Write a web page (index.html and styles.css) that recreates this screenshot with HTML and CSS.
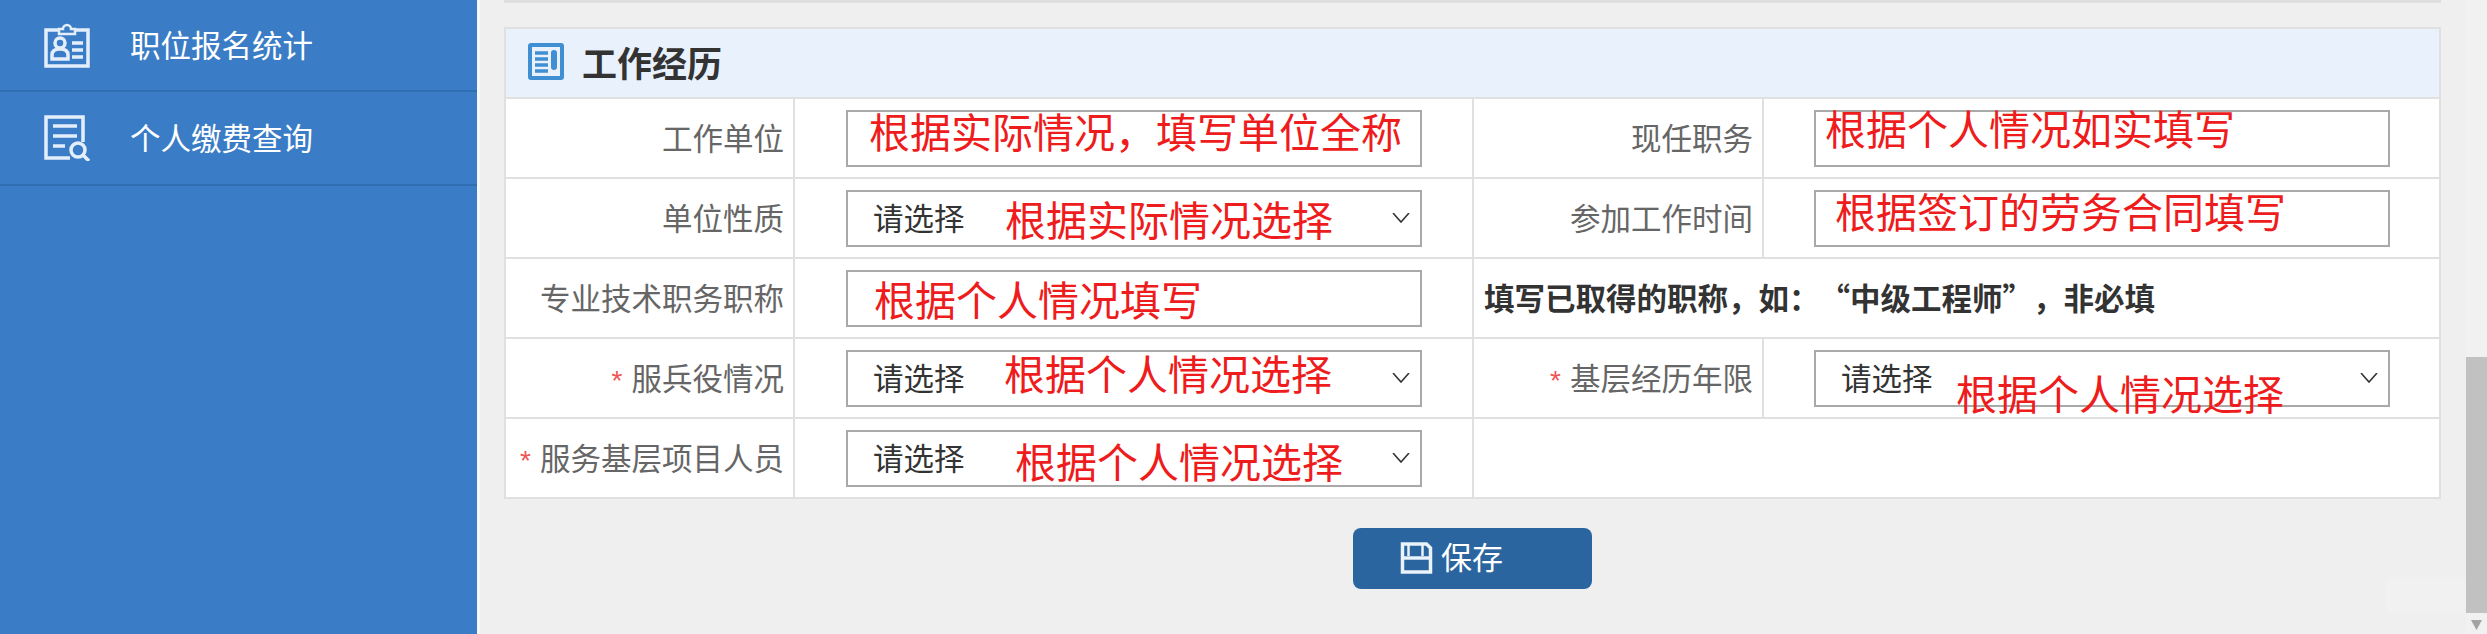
FILE: index.html
```html
<!DOCTYPE html>
<html lang="zh-CN">
<head>
<meta charset="UTF-8">
<title>工作经历</title>
<link rel="stylesheet" href="styles.css">
</head>
<body>
  <aside class="sidebar">
    <a class="side-item side-first" href="#">
      <svg class="side-icon" viewBox="0 0 46 46" fill="none" stroke="#e3eefa" stroke-width="3.5">
        <path d="M14 8H2v36h42V8H32"/>
        <path d="M15 12V7h4a4 4 0 0 1 8 0h4v5z" stroke-width="2.5"/>
        <circle cx="16" cy="21" r="5"/>
        <path d="M8 37v-4c0-4 3-6 8-6s8 2 8 6v4z"/>
        <path d="M28 21h11M28 28h11M28 35h11"/>
      </svg>
      <span>职位报名统计</span>
    </a>
    <a class="side-item" href="#">
      <svg class="side-icon" viewBox="0 0 46 46" fill="none" stroke="#e3eefa" stroke-width="3.5">
        <path d="M26 43H2V2h37v25"/>
        <path d="M9 11h24M9 21h24M9 31h12"/>
        <circle cx="34" cy="35" r="7"/>
        <path d="M39 40l6 6"/>
      </svg>
      <span>个人缴费查询</span>
    </a>
  </aside>

  <main class="content">
    <div class="prev-block"></div>

    <section class="panel">
      <h2 class="panel-title">
        <svg class="title-icon" viewBox="0 0 36 37">
          <rect width="36" height="37" rx="3" fill="#3f8fd2"/>
          <rect x="4" y="4" width="28" height="29" fill="#e9f1fd"/>
          <path d="M7 10h13M7 16h13M7 22h13M7 28h13" stroke="#3f8fd2" stroke-width="3.5"/>
          <rect x="23" y="7" width="6" height="20" rx="3" fill="#3f8fd2"/>
        </svg>
        工作经历
      </h2>
      <table class="form-table">
        <colgroup>
          <col class="col-first"><col class="col-field"><col class="col-label"><col>
        </colgroup>
        <tr>
          <td class="label">工作单位</td>
          <td>
            <div class="field">
              <input type="text">
              <span class="mark mark-1">根据实际情况，填写单位全称</span>
            </div>
          </td>
          <td class="label">现任职务</td>
          <td>
            <div class="field">
              <input type="text">
              <span class="mark mark-6">根据个人情况如实填写</span>
            </div>
          </td>
        </tr>
        <tr>
          <td class="label">单位性质</td>
          <td>
            <div class="field">
              <select><option>请选择</option></select>
              <svg class="chevron" viewBox="0 0 18 10"><path d="M1 0l8 9 8-9"/></svg>
              <span class="mark mark-2">根据实际情况选择</span>
            </div>
          </td>
          <td class="label">参加工作时间</td>
          <td>
            <div class="field">
              <input type="text">
              <span class="mark mark-7">根据签订的劳务合同填写</span>
            </div>
          </td>
        </tr>
        <tr>
          <td class="label">专业技术职务职称</td>
          <td>
            <div class="field">
              <input type="text">
              <span class="mark mark-3">根据个人情况填写</span>
            </div>
          </td>
          <td class="hint" colspan="2">填写已取得的职称，如：“中级工程师”，非必填</td>
        </tr>
        <tr>
          <td class="label"><span class="req">*</span>服兵役情况</td>
          <td>
            <div class="field">
              <select><option>请选择</option></select>
              <svg class="chevron" viewBox="0 0 18 10"><path d="M1 0l8 9 8-9"/></svg>
              <span class="mark mark-4">根据个人情况选择</span>
            </div>
          </td>
          <td class="label"><span class="req">*</span>基层经历年限</td>
          <td>
            <div class="field">
              <select><option>请选择</option></select>
              <svg class="chevron" viewBox="0 0 18 10"><path d="M1 0l8 9 8-9"/></svg>
              <span class="mark mark-8">根据个人情况选择</span>
            </div>
          </td>
        </tr>
        <tr>
          <td class="label"><span class="req">*</span>服务基层项目人员</td>
          <td>
            <div class="field">
              <select><option>请选择</option></select>
              <svg class="chevron" viewBox="0 0 18 10"><path d="M1 0l8 9 8-9"/></svg>
              <span class="mark mark-5">根据个人情况选择</span>
            </div>
          </td>
          <td colspan="2"></td>
        </tr>
      </table>
    </section>

    <div class="actions">
      <button class="save-btn" type="button">
        <svg class="save-icon" viewBox="0 0 32 32" fill="none" stroke="#eaf2fa" stroke-width="3.5">
          <path d="M2 2h24l4 4v24H2z"/>
          <path d="M2 16h28"/>
          <path d="M22 2v12" stroke-width="2.5"/>
          <path d="M8 2v12" stroke-width="2.5"/>
        </svg>
        <span class="save-text">保存</span>
      </button>
    </div>
  </main>

  <div class="scrollbar">
    <div class="scroll-thumb"></div>
    <svg class="scroll-arrow" viewBox="0 0 11 10"><path d="M0 0h11L5.5 10z"/></svg>
  </div>
  <div class="ghost-box"></div>
</body>
</html>
```

FILE: styles.css
```css
* {
  box-sizing: border-box;
}

body {
  margin: 0;
  height: 634px;
  overflow: hidden;
  display: flex;
  background-color: #efefef;
  color: #333;
  font-family: "Noto Sans CJK SC", "Noto Sans", sans-serif;
  font-size: 30.5px;
}

/* left menu */
.sidebar {
  width: 477px;
  flex-shrink: 0;
  background-color: #3a7dc6;
}

.side-item {
  display: flex;
  align-items: center;
  height: 94px;
  padding-left: 44px;
  color: #fff;
  text-decoration: none;
  border-bottom: 2px solid #2f6fb1;
}

.side-first {
  height: 92px;
}

.side-item span {
  margin-bottom: 2px;
}

.side-icon {
  width: 46px;
  height: 46px;
  margin-right: 40px;
}

.content {
  flex: 1;
  min-width: 0;
  padding: 0 25px 0 24px;
  border-left: 3px solid #f7f7f7;
}

.prev-block {
  height: 3px;
  background-color: #dedede;
  margin-bottom: 24px;
}

/* form panel */
.panel {
  border: 2px solid #e0e0e0;
  border-bottom: 0;
  background-color: #fff;
}

.panel-title {
  display: flex;
  align-items: center;
  height: 68px;
  margin: 0;
  padding: 0 0 3px 22px;
  font-size: 35px;
  font-weight: bold;
  color: #333;
  background-color: #e9f1fd;
}

.title-icon {
  width: 36px;
  height: 37px;
  margin-right: 18px;
}

.form-table {
  width: 100%;
  table-layout: fixed;
  border-collapse: collapse;
}

.form-table td {
  height: 80px;
  padding: 0 0 0 51px;
  border: 2px solid #e0e0e0;
  vertical-align: middle;
}

.form-table td:last-child {
  padding-left: 50px;
}

.form-table tr td:first-child {
  border-left: 0;
}

.form-table tr td:last-child {
  border-right: 0;
}

.col-first {
  width: 288px;
}

.col-label {
  width: 290px;
}

.col-field {
  width: 679px;
}

.form-table td.label {
  padding: 0 9px 3px 0;
  text-align: right;
  color: #666;
}

.form-table td.hint {
  padding: 0 0 3px 10px;
  font-weight: bold;
  color: #333;
  text-spacing-trim: space-all;
}

.req {
  margin-right: 9px;
  font-family: "Liberation Sans", sans-serif;
  font-size: 28px;
  color: #e55;
}

/* inputs */
.field {
  position: relative;
  width: 576px;
  height: 57px;
}

.field input,
.field select {
  display: block;
  width: 100%;
  height: 100%;
  padding: 0 0 2px 25px;
  border: 2px solid #a9a9a9;
  border-radius: 0;
  background-color: #fff;
  color: #333;
  font-family: inherit;
  font-size: 30.5px;
  appearance: none;
}

.chevron {
  position: absolute;
  top: 23px;
  right: 12px;
  width: 18px;
  height: 10px;
  fill: none;
  stroke: #333;
  stroke-width: 1.6;
}

/* red notes written over the screenshot */
.mark {
  position: absolute;
  font-size: 41px;
  line-height: 41px;
  color: #ee1c1c;
  white-space: nowrap;
}

.mark-1 { top: 0; left: 23px; }
.mark-2 { top: 8px; left: 159px; }
.mark-3 { top: 8px; left: 28px; }
.mark-4 { top: 2px; left: 158px; }
.mark-5 { top: 10px; left: 169px; }
.mark-6 { top: -3px; left: 11px; }
.mark-7 { top: 0; left: 21px; }
.mark-8 { top: 22px; left: 142px; }

.actions {
  display: flex;
  justify-content: center;
  margin-top: 29px;
}

.save-btn {
  display: flex;
  align-items: center;
  width: 239px;
  height: 61px;
  padding: 0 0 2px 47px;
  border: none;
  border-radius: 8px;
  background-color: #2a659f;
  color: #fff;
  font-family: inherit;
  font-size: 31px;
}

.save-icon {
  width: 33px;
  height: 32px;
  margin-right: 8px;
}

.save-text {
  margin-bottom: 4px;
}

/* fake window scrollbar */
.scrollbar {
  width: 21px;
  flex-shrink: 0;
  padding-top: 357px;
  background-color: #f1f1f1;
}

.scroll-thumb {
  height: 256px;
  background-color: #c1c1c1;
}

.scroll-arrow {
  display: block;
  width: 11px;
  height: 10px;
  margin: 7px auto 0;
  fill: #a3a3a3;
}

.ghost-box {
  position: absolute;
  top: 577px;
  left: 2385px;
  width: 81px;
  height: 36px;
  border-radius: 8px;
  background-color: rgba(255, 255, 255, 0.12);
}
```
